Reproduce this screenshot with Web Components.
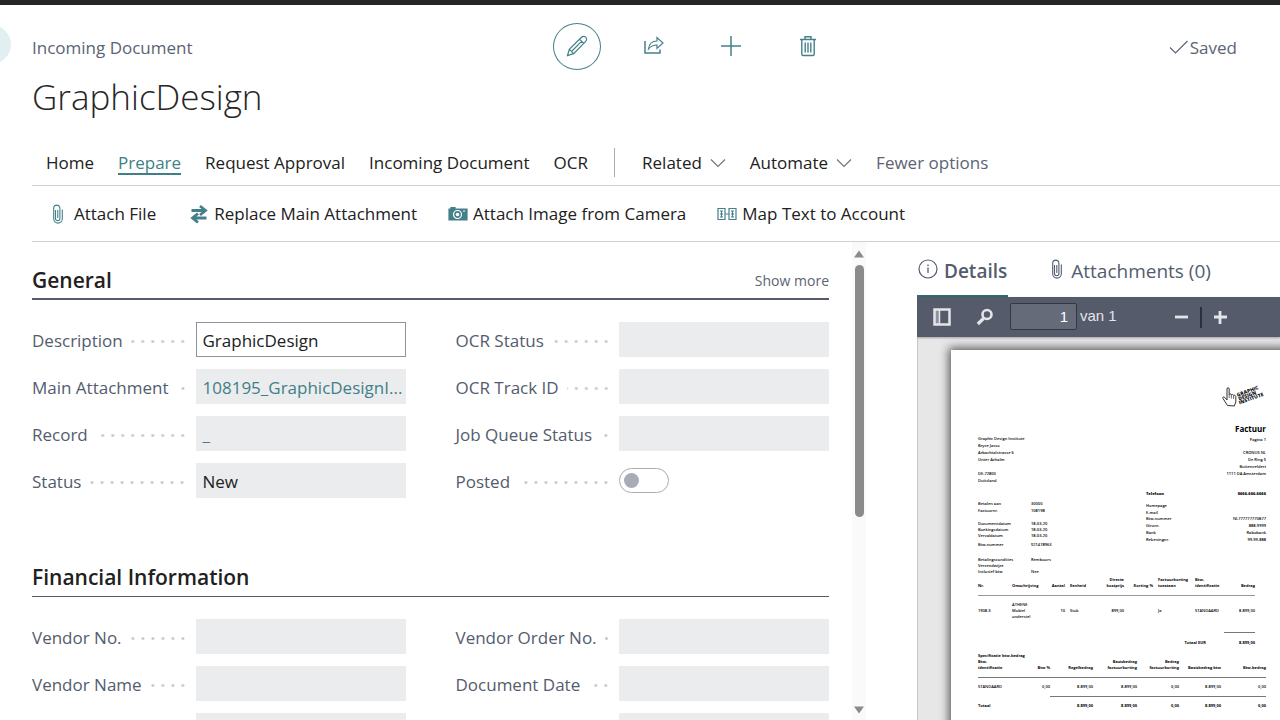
<!DOCTYPE html>
<html lang="en">
<head>
<meta charset="utf-8">
<title>GraphicDesign - Incoming Document</title>
<style>
  html, body { margin: 0; height: 100%; }
  body { overflow: hidden; background: #fff; color: #212121; font: 17px/24px "Open Sans", "Noto Sans", sans-serif; }
</style>
</head>
<body>
<incoming-document></incoming-document>
<script>
const register = (name, html, setup) => {
  const template = document.createElement('template');
  template.innerHTML = '<style>*{box-sizing:border-box}</style>' + html;
  customElements.define(name, class extends HTMLElement {
    connectedCallback() {
      if (this.shadowRoot) return;
      const root = this.attachShadow({ mode: 'open' });
      root.append(template.content.cloneNode(true));
      if (setup) setup(this, root);
    }
  });
};

const ICONS = {
  pencil: [22, 22, '<path d="M1.500 20.500l1.800-6.200L15.500 2.200a2.800 2.800 0 0 1 4.200 4.200L7.700 18.700zM3.300 14.300l4.400 4.400M13.500 4.200l4.200 4.200M15.600 6.300L6 16"/>'],
  share: [22, 22, '<path d="M2 6v12h15v-3.500" stroke-width="1.500"/><path d="M5.500 14c.6-5.500 4-8 8.500-8V2.500l6 5.500-6 5.500V10c-3.600 0-6 .8-8.500 4z"/>'],
  plus: [22, 22, '<path d="M11 1v20M1 11h20" stroke-width="1.500"/>'],
  trash: [22, 22, '<path d="M3 4.500h16M8 4V1.800h6V4M4.800 4.500v14.700q0 1.300 1.300 1.300h9.800q1.300 0 1.300-1.300V4.500M8.200 7.500v10M11 7.500v10M13.800 7.500v10" stroke-width="1.400"/>'],
  check: [20, 16, '<path d="M1 8.500L6.500 14 18.500 2"/>'],
  chevron: [16, 10, '<path d="M1 1.500l7 7 7-7"/>'],
  clip: [12, 20, '<path d="M3.500 6v8.500a2.200 2.200 0 0 0 4.400 0V4.200a3 3 0 0 0-6.200 0v10.600a4.300 4.300 0 0 0 8.600 0V5.500M5.800 6v8" stroke-width="1.100"/>'],
  swap: [20, 20, '<path d="M2.500 6.500h13M11 2l5.500 4.500L11 11M17.500 14h-13M9 9.500L3.500 14 9 18.500" stroke-width="2.800"/>'],
  camera: [20, 16, '<path d="M1 3h2V1.500h4V3h12v11H1z" fill="currentColor"/><circle cx="9.500" cy="8.500" r="4" stroke="#fff"/><circle cx="9.500" cy="8.500" r="1.800" fill="#fff" stroke="none"/><path d="M15 5h2" stroke="#fff"/>'],
  map: [20, 14, '<path d="M1 1.500h7v11H1zM12 1.500h7v11h-7zM8 7h4M3 4h3M3 7h3M3 10h3M14 4h3M14 7h3M14 10h3M4.500 4v6M15.500 4v6" stroke-width="1.200"/>'],
  info: [20, 20, '<circle cx="10" cy="10" r="9"/><path d="M10 8.500V14M10 5.500v1.500" stroke-width="1.300"/>'],
  sidebar: [18, 18, '<path d="M1.500 1.500h15v15h-15z" stroke-width="2.500"/><path d="M2 2h4v14H2z" fill="currentColor" fill-opacity=".4" stroke="none"/><path d="M6.500 2v14" stroke-width="1.500"/>'],
  search: [18, 18, '<circle cx="11" cy="6.500" r="4.500" stroke-width="2.600"/><path d="M7.500 10.500L1.800 16" stroke-width="3.200"/>'],
  minus: [14, 14, '<path d="M1 7h13" stroke-width="2.800"/>'],
  zoomin: [14, 14, '<path d="M7 1v13M1 7h13" stroke-width="2.800"/>']
};

register('ui-icon', `
  <style>:host{display:inline-flex;flex:none} svg{display:block;fill:none;stroke:currentColor;stroke-width:1.2}</style>
  <svg aria-hidden="true"></svg>`, (host, root) => {
  const [w, h, body] = ICONS[host.getAttribute('name')];
  const svg = root.querySelector('svg');
  svg.setAttribute('width', w);
  svg.setAttribute('height', h);
  svg.setAttribute('viewBox', `0 0 ${w} ${h}`);
  svg.innerHTML = body;
});

register('page-header', `
  <style>
    :host{display:block;position:relative;padding:18px 43px 0 32px}
    .back{position:absolute;left:-29px;top:20px;width:40px;height:39px;border:0;border-radius:50%;background:#e1eff2}
    .row{display:grid;grid-template-columns:1fr auto 405px;align-items:center;height:48px;color:#5b6374}
    .caption,.saved{padding-top:2px}
    .tools{display:flex;gap:29px;align-self:start}
    .tools button{display:flex;align-items:center;justify-content:center;width:48px;height:47px;padding:0 0 1px;border:1px solid transparent;border-radius:50%;background:none;color:#45808a}
    .tools .on{border-color:#45808a}
    .saved{display:flex;justify-content:flex-end;align-items:center;gap:1px}
    .saved ui-icon{margin-bottom:2px}
    h1{margin:2px 0 1px;font-size:35px;line-height:48px;font-weight:300;color:#262626}
  </style>
  <button class="back" aria-label="Back"></button>
  <div class="row">
    <span class="caption">Incoming Document</span>
    <div class="tools">
      <button class="on" aria-label="Edit"><ui-icon name="pencil"></ui-icon></button>
      <button aria-label="Share"><ui-icon name="share"></ui-icon></button>
      <button aria-label="New"><ui-icon name="plus"></ui-icon></button>
      <button aria-label="Delete"><ui-icon name="trash"></ui-icon></button>
    </div>
    <span class="saved"><ui-icon name="check"></ui-icon>Saved</span>
  </div>
  <h1>GraphicDesign</h1>`);

register('menu-tabs', `
  <style>
    :host{display:block;margin-left:32px;padding:20px 14px 2px;border-bottom:1px solid #cfd0d2}
    nav{display:flex;align-items:center;gap:24px;height:41px}
    a,button{font:inherit;line-height:20px;color:inherit;text-decoration:none;white-space:nowrap;border:0;background:none;padding:0}
    a{border-bottom:2px solid transparent;border-top:2px solid transparent}
    .on{color:#3f7f87;border-bottom-color:#3f7f87}
    button{display:flex;align-items:center;gap:8px}
    ui-icon{color:#70757f}
    i{width:1px;height:29px;margin:0 3px 0 2px;background:#a9acb2}
    .muted{color:#5b6374}
  </style>
  <nav>
    <a href="#home">Home</a><a href="#prepare" class="on">Prepare</a><a href="#request">Request Approval</a>
    <a href="#incoming">Incoming Document</a><a href="#ocr">OCR</a><i></i>
    <button>Related<ui-icon name="chevron"></ui-icon></button>
    <button>Automate<ui-icon name="chevron"></ui-icon></button>
    <button class="muted">Fewer options</button>
  </nav>`);

register('action-bar', `
  <style>
    :host{display:flex;gap:31px;align-items:center;height:56px;margin-left:32px;padding:0 20px;border-bottom:1px solid #cfd0d2}
    button{display:flex;align-items:center;gap:5px;font:inherit;color:inherit;border:0;background:none;padding:0;white-space:nowrap}
    .clip{gap:10px;margin-right:2px}
    ui-icon{color:#45808a}
  </style>
  <button class="clip"><ui-icon name="clip"></ui-icon>Attach File</button>
  <button><ui-icon name="swap"></ui-icon>Replace Main Attachment</button>
  <button><ui-icon name="camera"></ui-icon>Attach Image from Camera</button>
  <button><ui-icon name="map"></ui-icon>Map Text to Account</button>`);

register('fast-tab', `
  <style>
    :host{display:block;margin-bottom:41px}
    header{display:flex;align-items:center;justify-content:space-between;height:58px;padding-top:18px;border-bottom:1px solid #555b6b}
    :host([active]) header{border-bottom-width:2px;padding-top:20px}
    h2{margin:0;font-size:21px;line-height:28px;font-weight:600}
    button{border:0;background:none;padding:2px 0 0;font:inherit;font-size:14px;line-height:20px;color:#5b6374}
    .grid{display:grid;grid-template-columns:1fr 1fr;gap:12px 50px;padding-top:22px}
  </style>
  <header><h2></h2></header>
  <div class="grid"><slot></slot></div>`, (host, root) => {
  root.querySelector('h2').textContent = host.getAttribute('heading');
  if (host.hasAttribute('more')) {
    const b = document.createElement('button');
    b.textContent = host.getAttribute('more');
    root.querySelector('header').append(b);
  }
});

register('form-field', `
  <style>
    :host{display:flex;align-items:center;height:35px}
    .cap{flex:1;min-width:0;display:flex;align-items:center;margin-right:10px;color:#535c6e}
    .cap label{padding-top:2px;white-space:nowrap}
    .dots{flex:1;height:3px;margin:4px 0 0 8px;background:radial-gradient(circle at 7px 50%,#c9cbcf 1px,transparent 2px) right top/10px 3px repeat-x}
    .box{flex:none;width:210px;height:35px;padding:1px 7px 0;border:0;border-radius:0;background:#ebecee;font:inherit;line-height:35px;color:#212121;outline:0}
    .edit{border:1px solid #8e93a0;background:#fff;padding:1px 6px 0}
    a.box{color:#3f7f87;text-decoration:none;white-space:nowrap;overflow:hidden}
    .wrap{flex:none;width:210px;display:flex}
    .toggle{appearance:none;display:flex;align-items:center;width:50px;height:25px;margin:0;padding-left:4px;border:1px solid #a8acb6;border-radius:13px;background:#fff}
    .toggle::before{content:"";width:15px;height:15px;border-radius:50%;background:#a8acb6}
  </style>
  <div class="cap"><label for="f"></label><span class="dots"></span></div>`, (host, root) => {
  root.querySelector('label').textContent = host.getAttribute('label') || '';
  const kind = host.getAttribute('kind');
  const value = host.getAttribute('value') || '';
  let el;
  if (kind === 'link') {
    el = document.createElement('a');
    el.href = '#open';
    el.textContent = value;
    el.className = 'box';
    el.id = 'f';
    root.append(el);
  } else {
    el = document.createElement('input');
    el.id = 'f';
    if (kind === 'toggle') {
      el.type = 'checkbox';
      el.className = 'toggle';
      const wrap = document.createElement('div');
      wrap.className = 'wrap';
      wrap.append(el);
      root.append(wrap);
    } else {
      el.type = 'text';
      el.value = value;
      el.className = kind === 'edit' ? 'box edit' : 'box';
      el.readOnly = kind !== 'edit';
      root.append(el);
    }
  }
});

register('scroll-rail', `
  <style>
    :host{display:flex;flex-direction:column;align-items:center;width:14px;padding:8px 0 6px;background:#fafafa}
    svg{display:block;flex:none;fill:#8b8b8b}
    .track{flex:1;width:9px;padding:7px 0}
    .thumb{height:58%;border-radius:5px;background:#8b8b8b}
  </style>
  <svg width="10" height="8"><path d="M5 .5L10 7.500H0z"/></svg>
  <div class="track"><div class="thumb"></div></div>
  <svg width="10" height="8"><path d="M5 7.500L10 .5H0z"/></svg>`);

register('fact-tabs', `
  <style>
    :host{display:flex;gap:42px;height:55px;color:#535c6e;font-size:19px;line-height:26px}
    a{display:flex;align-items:center;gap:6px;padding:4px 1px 0;color:inherit;text-decoration:none;white-space:nowrap;border-bottom:2px solid transparent}
    a.on{font-weight:600;border-color:#2f6a70}
    a ui-icon{margin-bottom:4px}
    .files{gap:8px}
  </style>
  <a class="on" href="#details"><ui-icon name="info"></ui-icon>Details</a>
  <a class="files" href="#attachments"><ui-icon name="clip"></ui-icon><span>Attachments (0)</span></a>`);

register('pdf-toolbar', `
  <style>
    :host{display:flex;align-items:center;height:40px;padding-left:16px;background:#555b6a;color:#e4e5e8;font:15px/20px "Liberation Sans",Arial,sans-serif;box-shadow:0 1px 2px rgba(0,0,0,.3);position:relative}
    button{display:flex;border:0;background:none;padding:0;color:inherit}
    .find{margin:0 16px 0 25px}
    input{width:67px;height:27px;margin:0 3px 2px 0;padding:0 8px;border:1px solid #343842;border-radius:2px;background:#666b79;color:#fff;font:inherit;text-align:right;outline:0}
    label{padding-bottom:2px}
    .out{margin:0 12px 0 57px}
    i{width:2px;height:21px;background:#2c303a;margin-right:11px}
  </style>
  <button aria-label="Sidebar"><ui-icon name="sidebar"></ui-icon></button>
  <button class="find" aria-label="Find"><ui-icon name="search"></ui-icon></button>
  <input id="p" value="1" aria-label="Page"><label for="p">van 1</label>
  <button class="out" aria-label="Zoom out"><ui-icon name="minus"></ui-icon></button><i></i>
  <button aria-label="Zoom in"><ui-icon name="zoomin"></ui-icon></button>`);

register('invoice-page', `
  <style>
    :host{display:block;width:344px;height:486px;padding:34px 29px 0 27px;background:#fff;color:#000;font:600 4px/7px "Open Sans",sans-serif;box-shadow:0 0 9px 2px #555}
    p{margin:0;white-space:nowrap}
    .logo{display:block;margin-left:auto}
    h3{margin:0;font-size:8px;line-height:10px;font-weight:700}
    .top,.info{display:flex;justify-content:space-between}
    .top{margin-top:16px;height:59px}
    .from{padding-top:11px}
    .to{text-align:right}
    .to .pg{margin:2px 0 6px}
    .info{height:93px}
    dl{display:grid;margin:0;align-content:start;white-space:nowrap}
    dd,dt{margin:0}
    .l{grid-template-columns:53px auto;grid-template-rows:7px 6px 7px 6px 6px 6px 3px 6px 9px 6px 6px 6px;line-height:6px;padding-top:18px}
    .r{grid-template-columns:1fr auto;grid-template-rows:7px 5px 7px 6px 7px 7px 7px 6px;width:120px;line-height:7px;padding-top:7px}
    .r dd{text-align:right}
    dl .s{grid-column:1/3}
    b{font-weight:800}
    table{border-collapse:collapse;table-layout:fixed;line-height:6px}
    th,td{padding:0;text-align:left;vertical-align:bottom;font-weight:600;white-space:nowrap}
    th,.sum td{font-weight:700}
    .n{text-align:right}
    .p5{padding-left:5px}
    .a{width:277px}
    .a thead th{height:19px;padding-bottom:6px;border-bottom:1px solid #999}
    .a .item td{height:37px;vertical-align:middle;padding-bottom:5px}
    .a .total td{height:14px;font-weight:700}
    .a .total .sumcap{padding-right:18px}
    .a .amt{border-top:1px solid #777}
    h4{margin:7px 0 0;font-size:4px;line-height:6px}
    .b{width:288px}
    .b thead th{height:18px;padding-bottom:6px;border-bottom:1px solid #777}
    .b td{height:19px;vertical-align:middle}
    .b .sum td.n{border-top:1px solid #777}
    .b .sum td.x{border-top:0}
  </style>
  <svg class="logo" width="46" height="24" viewBox="0 0 46 24" role="img" aria-label="Graphic Design Institute">
    <path d="M7.500 21.500L3 14.500c-.8-1.500.8-2.200 1.800-1L7 16V5c0-1.800 2.200-1.800 2.200 0v5.500c.5-1 2-.8 2.200.5.600-1 2-.600 2.200.600.700-.8 2-.3 2.200 1V18l-1.500 4z" fill="#fff" stroke="#333"/>
    <path d="M9.200 10v4M11.400 11v3.500M13.600 12v3" stroke="#333" stroke-width=".7"/>
    <g transform="rotate(-20 17 14)" font-family="Open Sans,sans-serif" font-weight="800" font-size="5" fill="#111">
      <text x="18" y="13">GRAPHIC</text><text x="18" y="17">DESIGN</text><text x="17" y="21">INSTITUTE</text>
    </g>
  </svg>
  <div class="top">
    <div class="from"><p>Graphic Design Institute</p><p>Bryce Jasso</p><p>Arbachtalstrasse 6</p><p>Unter Achalm</p><p>&nbsp;</p><p>DE-72800</p><p>Duitsland</p></div>
    <div class="to"><h3>Factuur</h3><p class="pg">Pagina 1</p><p>CRONUS NL</p><p>De Ring 5</p><p>Buitenveldert</p><p>1111 DA Amsterdam</p></div>
  </div>
  <div class="info">
    <dl class="l">
      <dt>Betalen aan</dt><dd>30000</dd><dt>Factuurnr.</dt><dd>108198</dd><dt class="s"></dt>
      <dt>Documentdatum</dt><dd>18-03-20</dd><dt>Boekingsdatum</dt><dd>18-03-20</dd><dt>Vervaldatum</dt><dd>18-03-20</dd>
      <dt class="s"></dt><dt>Btw-nummer</dt><dd>521478963</dd><dt class="s"></dt>
      <dt>Betalingscondities</dt><dd>Rembours</dd><dt>Verzendwijze</dt><dd></dd><dt>Inclusief btw</dt><dd>Nee</dd>
    </dl>
    <dl class="r">
      <dt><b>Telefoon</b></dt><dd><b>0666-666-6666</b></dd><dt class="s"></dt>
      <dt>Homepage</dt><dd></dd><dt>E-mail</dt><dd></dd><dt>Btw-nummer</dt><dd>NL777777770B77</dd>
      <dt>Gironr.</dt><dd>888-9999</dd><dt>Bank</dt><dd>Rabobank</dd><dt>Rekeningnr.</dt><dd>99-99-888</dd>
    </dl>
  </div>
  <table class="a">
    <colgroup><col style="width:34px"><col style="width:36px"><col style="width:17px"><col style="width:32px"><col style="width:27px"><col style="width:29px"><col style="width:42px"><col style="width:29px"><col style="width:31px"></colgroup>
    <thead><tr><th>Nr.</th><th>Omschrijving</th><th class="n">Aantal</th><th class="p5">Eenheid</th><th class="n">Directe<br>kostprijs</th><th class="n">Korting %</th><th class="p5">Factuurkorting<br>toestaan</th><th>Btw-<br>identificatie</th><th class="n">Bedrag</th></tr></thead>
    <tbody>
      <tr class="item"><td>1908-S</td><td>ATHENE<br>Mobiel<br>onderstel</td><td class="n">10</td><td class="p5">Stuk</td><td class="n">899,00</td><td></td><td class="p5">Ja</td><td>STANDAARD</td><td class="n">8.899,00</td></tr>
      <tr class="total"><td colspan="6"></td><td class="n sumcap" colspan="2">Totaal EUR</td><td class="n amt">8.899,00</td></tr>
    </tbody>
  </table>
  <h4>Specificatie btw-bedrag</h4>
  <table class="b">
    <colgroup><col style="width:52px"><col style="width:20px"><col style="width:43px"><col style="width:44px"><col style="width:42px"><col style="width:42px"><col style="width:45px"></colgroup>
    <thead><tr><th>Btw-<br>identificatie</th><th class="n">Btw %</th><th class="n">Regelbedrag</th><th class="n">Basisbedrag<br>factuurkorting</th><th class="n">Bedrag<br>factuurkorting</th><th class="n">Basisbedrag btw</th><th class="n">Btw-bedrag</th></tr></thead>
    <tbody>
      <tr><td>STANDAARD</td><td class="n">0,00</td><td class="n">8.899,00</td><td class="n">8.899,00</td><td class="n">0,00</td><td class="n">8.899,00</td><td class="n">0,00</td></tr>
      <tr class="sum"><td>Totaal</td><td class="n x"></td><td class="n">8.899,00</td><td class="n">8.899,00</td><td class="n">0,00</td><td class="n">8.899,00</td><td class="n">0,00</td></tr>
    </tbody>
  </table>`);

register('fact-pane', `
  <style>
    :host{display:flex;flex-direction:column;min-width:0;overflow:hidden}
    .view{flex:1;min-height:0;overflow:hidden;padding:13px 0 0 33px;border-left:1px solid #c8c8c8;background:#e7e7e7}
  </style>
  <fact-tabs></fact-tabs><pdf-toolbar></pdf-toolbar>
  <div class="view"><invoice-page></invoice-page></div>`);

register('incoming-document', `
  <style>
    :host{display:flex;flex-direction:column;height:100vh;border-top:5px solid #262626;box-sizing:border-box}
    .body{flex:1;min-height:0;display:grid;grid-template-columns:minmax(0,1fr) 65px 363px}
    .form{overflow:hidden;padding:0 23px 0 32px}
  </style>
  <page-header></page-header>
  <menu-tabs></menu-tabs>
  <action-bar></action-bar>
  <div class="body">
    <main class="form">
      <fast-tab heading="General" more="Show more" active>
        <form-field label="Description" kind="edit" value="GraphicDesign"></form-field>
        <form-field label="OCR Status"></form-field>
        <form-field label="Main Attachment" kind="link" value="108195_GraphicDesignI..."></form-field>
        <form-field label="OCR Track ID"></form-field>
        <form-field label="Record" kind="link" value="_"></form-field>
        <form-field label="Job Queue Status"></form-field>
        <form-field label="Status" value="New"></form-field>
        <form-field label="Posted" kind="toggle"></form-field>
      </fast-tab>
      <fast-tab heading="Financial Information">
        <form-field label="Vendor No."></form-field>
        <form-field label="Vendor Order No."></form-field>
        <form-field label="Vendor Name"></form-field>
        <form-field label="Document Date"></form-field>
        <form-field></form-field>
        <form-field></form-field>
      </fast-tab>
    </main>
    <scroll-rail></scroll-rail>
    <fact-pane></fact-pane>
  </div>`);
</script>
</body>
</html>
